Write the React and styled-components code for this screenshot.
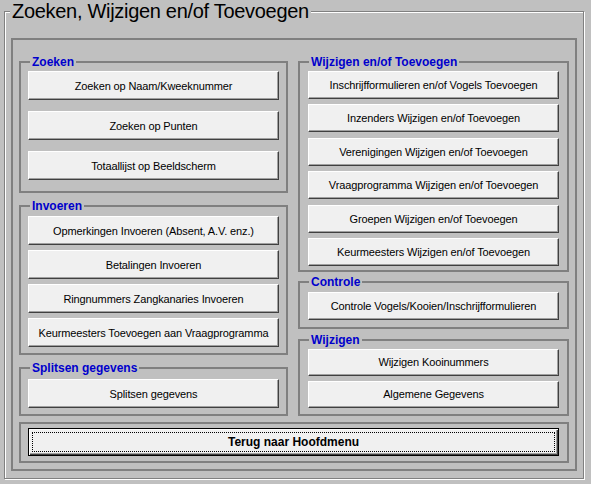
import React from 'react';
import styled, { createGlobalStyle } from 'styled-components';

const Global = createGlobalStyle`
  html, body { margin: 0; padding: 0; background: #c0c0c0; }
  body {
    width: 591px; height: 484px; overflow: hidden;
    font-family: "Liberation Sans", Arial, sans-serif;
  }
`;

const Window = styled.div`
  width: 591px;
  height: 484px;
  box-sizing: border-box;
  padding: 0 7px 0 4px;
  background: #c0c0c0;
`;

const Frame = styled.fieldset`
  margin: 0;
  min-width: 0;
  width: 580px;
  box-sizing: border-box;
  padding: 15px 6px 7px 6px;
  border: 1px solid #808080;
  box-shadow: inset 1px 1px 0 #ffffff, 1px 1px 0 #ffffff;
`;

const FrameTitle = styled.legend`
  margin-left: -1px;
  padding: 0 2px;
  background: #c0c0c0;
  font: 20px/23px "Liberation Sans", Arial, sans-serif;
  letter-spacing: -0.3px;
  color: #000;
`;

const Panel = styled.div`
  border: 2px solid #808080;
  padding: 15px 6px 6px 6px;
  display: grid;
  grid-template-columns: 269px 271px;
  column-gap: 10px;
  row-gap: 6px;
`;

const Column = styled.div`
  display: flex;
  flex-direction: column;
`;

const Group = styled.fieldset`
  margin: ${p => p.$mt || 0}px 0 0 0;
  min-width: 0;
  border: 2px solid #808080;
  padding: ${p => p.$pt}px 0 ${p => p.$pb}px 0;
  display: flex;
  flex-direction: column;
  align-items: center;
  gap: ${p => p.$gap}px;
`;

const GroupTitle = styled.legend`
  margin-left: 9px;
  padding: 0 2px;
  font: bold 12px/14px "Liberation Sans", Arial, sans-serif;
  color: #0000cc;
`;

const Button = styled.button`
  flex: none;
  width: 251px;
  height: ${p => p.$h}px;
  margin: 0;
  padding: 0;
  box-sizing: border-box;
  background: #f0f0f0;
  border: 1px solid;
  border-color: #ffffff #404040 #404040 #ffffff;
  box-shadow: inset -1px -1px 0 #a0a0a0;
  font: 11px "Liberation Sans", Arial, sans-serif;
  letter-spacing: -0.12px;
  color: #000;
  white-space: nowrap;
`;

const BackBox = styled.div`
  grid-column: 1 / -1;
  border: 2px solid #808080;
  padding: 4px 8px 5px 7px;
  display: flex;
`;

const BackButton = styled.button`
  flex: 1;
  height: 28px;
  margin: 0;
  padding: 0;
  box-sizing: border-box;
  background: #f0f0f0;
  border: 1px solid #000;
  box-shadow: inset 1px 1px 0 #ffffff, inset -1px -1px 0 #404040, inset -2px -2px 0 #a0a0a0;
  outline: 1px dotted #000;
  outline-offset: -5px;
  font: bold 12px "Liberation Sans", Arial, sans-serif;
  color: #000;
`;

const left = [
  {
    title: 'Zoeken', pt: 2, pb: 11, gap: 11, h: 29, mt: 0,
    items: ['Zoeken op Naam/Kweeknummer', 'Zoeken op Punten', 'Totaallijst op Beeldscherm'],
  },
  {
    title: 'Invoeren', pt: 3, pb: 6, gap: 5, h: 29, mt: 6,
    items: [
      'Opmerkingen Invoeren (Absent, A.V. enz.)',
      'Betalingen Invoeren',
      'Ringnummers Zangkanaries Invoeren',
      'Keurmeesters Toevoegen aan Vraagprogramma',
    ],
  },
  {
    title: 'Splitsen gegevens', pt: 4, pb: 6, gap: 5, h: 29, mt: 6,
    items: ['Splitsen gegevens'],
  },
];

const right = [
  {
    title: 'Wijzigen en/of Toevoegen', pt: 2, pb: 4, gap: 5.4, h: 28, mt: 0,
    items: [
      'Inschrijfformulieren en/of Vogels Toevoegen',
      'Inzenders Wijzigen en/of Toevoegen',
      'Verenigingen Wijzigen en/of Toevoegen',
      'Vraagprogramma Wijzigen en/of Toevoegen',
      'Groepen Wijzigen en/of Toevoegen',
      'Keurmeesters Wijzigen en/of Toevoegen',
    ],
  },
  {
    title: 'Controle', pt: 3, pb: 7, gap: 5, h: 28, mt: 3,
    items: ['Controle Vogels/Kooien/Inschrijfformulieren'],
  },
  {
    title: 'Wijzigen', pt: 2, pb: 6, gap: 5, h: 27, mt: 4,
    items: ['Wijzigen Kooinummers', 'Algemene Gegevens'],
  },
];

function GroupList({ groups }) {
  return (
    <Column>
      {groups.map(g => (
        <Group key={g.title} $pt={g.pt} $pb={g.pb} $gap={g.gap} $mt={g.mt}>
          <GroupTitle>{g.title}</GroupTitle>
          {g.items.map(t => (
            <Button key={t} $h={g.h}>{t}</Button>
          ))}
        </Group>
      ))}
    </Column>
  );
}

export default function App() {
  return (
    <>
      <Global />
      <Window>
        <Frame>
          <FrameTitle>Zoeken, Wijzigen en/of Toevoegen</FrameTitle>
          <Panel>
            <GroupList groups={left} />
            <GroupList groups={right} />
            <BackBox>
              <BackButton>Terug naar Hoofdmenu</BackButton>
            </BackBox>
          </Panel>
        </Frame>
      </Window>
    </>
  );
}
